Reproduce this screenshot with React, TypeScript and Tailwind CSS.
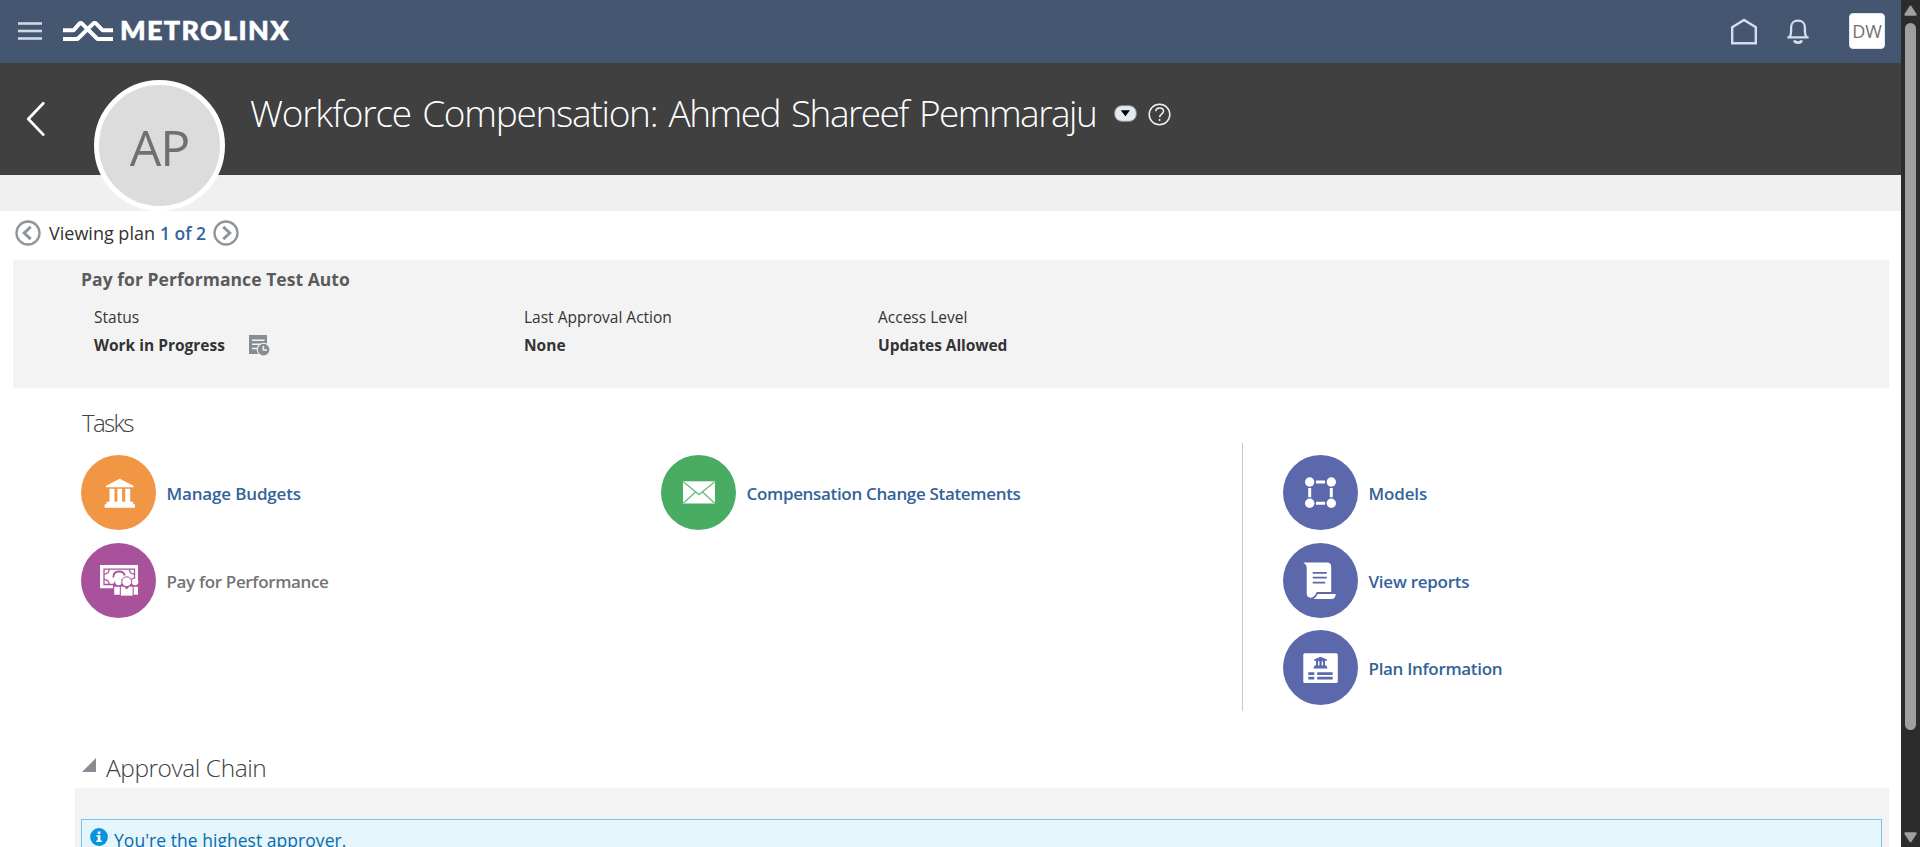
import type { ReactNode } from "react";

function TopBar() {
  return (
    <header className="flex h-[63px] shrink-0 items-center bg-[#455671]">
      <svg className="ml-[18px] mt-[-1px] h-[18px] w-6" viewBox="0 0 24 18" fill="#cfd9e6">
        <rect width="24" height="2.6" y="0.2" />
        <rect width="24" height="2.6" y="7.7" />
        <rect width="24" height="2.6" y="15.2" />
      </svg>
      <svg className="ml-5 mt-[-2px] h-[22px] w-[51px]" viewBox="62 20 51 22" fill="none" stroke="#fff" strokeWidth="4">
        <path d="M63 30.3h10.5l6.6-7.4h1.2L97.5 39H113" strokeLinejoin="bevel" />
        <path d="M63 39h14.5L94 22.9h1.4l7.3 7.4H113" strokeLinejoin="bevel" />
      </svg>
      <span className="ml-[7px] mt-[-3px] font-['Lato',sans-serif] text-[27px] leading-[40px] font-black tracking-[1.3px] text-white [-webkit-text-stroke:0.6px_white]">
        METROLINX
      </span>
      <div className="ml-auto flex items-center">
        <svg className="h-[27px] w-7" viewBox="0 0 28 27" fill="none" stroke="#d5deea" strokeWidth="2.4">
          <path d="M2.2 9.2 14 2l11.8 7.2v16.1H2.2Z" />
        </svg>
        <svg className="ml-[29px] h-[26px] w-[22px]" viewBox="0 0 22 26" fill="none" stroke="#d5deea" strokeWidth="2.3">
          <path d="M.4 18.4h21.2M2.6 18c1.2-1.5 1.5-3 1.5-5.4V8.3C4.1 4.3 6.9 1.7 11 1.7s6.9 2.6 6.9 6.6v4.300c0 2.400.3 3.900 1.500 5.400" />
          <path d="M7.3 21.3c.5 1.6 2 2.3 3.7 2.3s3.2-.7 3.7-2.3" strokeWidth="2.8" />
        </svg>
        <span className="mt-[-1px] mr-4 ml-10 flex size-9 items-center justify-center rounded-[4px] border border-[#dfe6ee] bg-white text-[18px] leading-[34px] text-[#707070]">
          DW
        </span>
      </div>
    </header>
  );
}

function PersonHeader() {
  return (
    <div className="flex h-[148px] shrink-0 flex-col">
      <div className="flex h-[112px] items-start bg-[#404040]">
        <svg className="mt-[38px] ml-[26px] h-9 w-5" viewBox="0 0 20 36" fill="none" stroke="#fff" strokeWidth="2.8" strokeLinecap="round" strokeLinejoin="round">
          <path d="M17.3 2.2 2.3 18l15 15.6" />
        </svg>
        <div className="z-10 mt-[17px] ml-12 flex size-[131px] shrink-0 items-center justify-center rounded-full border-[5px] border-white bg-[#dcdcdc] pt-[2px] text-[50px] leading-none tracking-[-1.2px] text-[#707070]">
          AP
        </div>
        <div className="mt-[20px] ml-[25px] flex h-[60px] items-center">
          <h1 className="text-[37px] leading-[60px] font-light whitespace-nowrap text-white [word-spacing:3px]">
            <span className="tracking-[-1.26px]">Workforce Compensation: </span>
            <span className="tracking-[-1.55px]">Ahmed Shareef Pemmaraju</span>
          </h1>
          <svg className="ml-[18px] h-[17px] w-[23px]" viewBox="0 0 23 17">
            <rect x=".7" y=".7" width="21.6" height="15.6" rx="7" fill="#e6ebef" stroke="#8698a8" strokeWidth="1" />
            <path d="M6.8 5.2h9.2l-4.6 6Z" fill="#000" />
          </svg>
          <svg className="mt-[2px] ml-[11px] size-[23px]" viewBox="0 0 23 23" fill="none" stroke="#f2f2f2" strokeWidth="1.5">
            <circle cx="11.5" cy="11.5" r="10.3" />
            <path d="M7.7 8.3c.2-2.1 1.7-3.3 3.9-3.3 2.3 0 3.9 1.2 3.9 3.2 0 2.900-3.900 2.900-3.900 6.100M11.600 16v2" />
          </svg>
        </div>
      </div>
      <div className="h-9 bg-[#f0f0f0]" />
    </div>
  );
}

function CircleArrow({ flip = false }: { flip?: boolean }) {
  return (
    <svg className={flip ? "size-[26px] rotate-180" : "size-[26px]"} viewBox="0 0 26 26" fill="none" stroke="#8f9499">
      <circle cx="13" cy="13" r="11.5" strokeWidth="2.3" />
      <path d="m15.7 6.9-6.500 6.100 6.500 6.100" strokeWidth="2.9" />
    </svg>
  );
}

function PlanPager() {
  return (
    <div className="mb-[5px] flex h-11 shrink-0 items-center pl-[15px] text-[18px] leading-[44px]">
      <CircleArrow />
      <span className="ml-[8px] text-[#333]">Viewing plan</span>
      <span className="ml-[5px] text-[17.5px] font-semibold text-[#34639a]">1 of 2</span>
      <span className="ml-[7px] flex">
        <CircleArrow flip />
      </span>
    </div>
  );
}

function Field({ label, children, className }: { label: ReactNode; children: ReactNode; className: string }) {
  return (
    <div className={"text-[15.5px] leading-7 text-[#333] " + className}>
      <div>{label}</div>
      <div className="flex items-center font-bold">{children}</div>
    </div>
  );
}

function PlanSummary() {
  return (
    <section className="mr-3 ml-[13px] h-32 shrink-0 bg-[#f3f3f3]">
      <h2 className="pl-[68px] text-[17.5px] leading-[38px] font-bold tracking-[0.05px] text-[#5b5b5b]">
        Pay for Performance Test Auto
      </h2>
      <div className="mt-[5px] flex pl-[81px]">
        <Field label="Status" className="w-[430px]">
          Work in Progress
          <svg className="ml-[24px] h-[21px] w-[21px]" viewBox="0 0 21 21">
            <path d="M0 0h18v19H0Z" fill="#878d92" />
            <path d="M3 5.2h12.5M3 9.3h8.5M3 13.5h5" stroke="#f3f3f3" strokeWidth="1.6" />
            <circle cx="14.6" cy="14.6" r="6.9" fill="#f3f3f3" />
            <circle cx="14.6" cy="14.6" r="5.8" fill="#878d92" />
            <path d="M14.4 11v4h3.6" stroke="#f3f3f3" strokeWidth="1.5" fill="none" />
          </svg>
        </Field>
        <Field label="Last Approval Action" className="w-[354px]">
          None
        </Field>
        <Field label="Access Level" className="w-[300px]">
          <span className="tracking-[-0.07px]">Updates Allowed</span>
        </Field>
      </div>
    </section>
  );
}

function BankIcon() {
  return (
    <svg className="size-[75px]" viewBox="0 0 75 75" fill="#fff">
      <path d="M25 32.3v-1.5L38.8 23.7 52.4 30.8v1.5Z" />
      <path d="M28.500 33.800h5V47h-5zM36.400 33.800h4.700V47h-4.700zM44.200 33.800h5V47h-5z" />
      <path d="M25.500 46.700h26.700v2.600h1.800v3.400H23.700v-3.400h1.800Z" />
    </svg>
  );
}

function MoneyIcon() {
  return (
    <svg className="size-[75px]" viewBox="0 0 75 75" fill="#fff">
      <path d="M19 22h38v23.300H19Z" />
      <path d="M23 26.200h30.500v15.300H23Z" fill="none" stroke="#a9529c" strokeWidth="1.3" />
      <path d="M23.200 31.200c3-.3 4.700-2 5-4.700M23.200 36.300c3 .3 4.700 2 5 4.700M48.300 26.500c.3 2.700 2 4.400 5 4.700" stroke="#a9529c" strokeWidth="1.3" fill="none" />
      <path d="M32.300 34.500c0-4 2.300-6 5.700-6 3.300 0 5.200 1.500 5.700 4" stroke="#a9529c" strokeWidth="1.8" fill="none" />
      <path d="M32 46.500v-5l2-3.500 3.300-2.500 5 1.500 3.300-3.500 4 2.500 3.500-1.500 4.500 3v9Z" fill="#a9529c" />
      <circle cx="37.5" cy="38.8" r="3.4" />
      <circle cx="54" cy="38.8" r="3.4" />
      <path d="M33.200 43.700h5.600v8.100h-5.600zM52.600 43.700H57v8.100h-4.400z" />
      <circle cx="45.7" cy="38.7" r="4.9" stroke="#a9529c" strokeWidth="1" />
      <path d="M39.500 43.300H43l2.700 2.800 2.800-2.800h3.500v9.700H39.500Z" stroke="#a9529c" strokeWidth=".7" />
    </svg>
  );
}

function MailIcon() {
  return (
    <svg className="size-[75px]" viewBox="0 0 75 75">
      <path d="M22 26.3h32v22.2H22Z" fill="#fff" />
      <path d="m22.500 27 15.500 12.500L53.500 27M22.500 48l12-11M53.500 48l-12-11" fill="none" stroke="#6cbd82" strokeWidth="1.4" />
    </svg>
  );
}

function ModelsIcon() {
  return (
    <svg className="size-[75px]" viewBox="0 0 75 75" fill="#fff">
      <circle cx="26.7" cy="27" r="4.7" />
      <circle cx="48.3" cy="27" r="4.7" />
      <circle cx="26.7" cy="48.3" r="4.7" />
      <circle cx="48.3" cy="48.3" r="4.7" />
      <path d="M33 25.500h9v3h-9zM33 46.800h9v3h-9zM25.200 33h3v9.300h-3zM46.800 33h3v9.300h-3z" />
    </svg>
  );
}

function ReportIcon() {
  return (
    <svg className="size-[75px]" viewBox="0 0 75 75" fill="#fff">
      <path d="M20.300 19.500h24c2.500 0 3.900 1.700 3.900 4.500v25H33.700c-1.300 3.300-3 5.500-5.700 5.700-3 .2-4.300-1.800-4.300-4.700V25c0-2.500-1-4-3.400-5.500Z" />
      <path d="M34.500 51h18.300c-.3 2.900-1.500 4.600-3.600 5H30.500c1.800-1 3.200-2.700 4-5Z" />
      <path d="M29.700 29.800h14M29.700 34.700h14M29.700 39.700h12.500" stroke="#5c68ac" strokeWidth="1.8" />
    </svg>
  );
}

function PlanIcon() {
  return (
    <svg className="size-[75px]" viewBox="0 0 75 75">
      <rect x="20.3" y="23.3" width="34.5" height="29.7" rx="1.5" fill="#fff" />
      <g fill="#5c68ac">
        <path d="M31 30.700v-1.200l6.500-2.700 6.500 2.700v1.200h-2v4.800h1.500l1 3H30.400l1-3H33v-4.800Z" />
        <path d="M25.300 42.300h6v2.800h-6zM34.200 42.300h15.500v2.800H34.200zM25.300 46.700h6v2.800h-6zM34.200 46.700h15.500v2.800H34.200z" />
      </g>
      <path d="M35.700 31.200v4.300M39.400 31.200v4.300" stroke="#fff" strokeWidth="1.4" />
    </svg>
  );
}

function Task({ icon, color, children }: { icon: ReactNode; color: string; children: ReactNode }) {
  return (
    <div className="flex items-center">
      <span className={"size-[75px] shrink-0 rounded-full " + color}>{icon}</span>
      <span className="ml-[10.5px] pt-[3px] text-[17px] leading-[30px] font-semibold whitespace-nowrap text-[#34639a]">
        {children}
      </span>
    </div>
  );
}

function Tasks() {
  return (
    <section className="shrink-0 pl-[81px]">
      <h2 className="pt-[14px] pl-[1px] text-[24px] leading-[41px] font-light tracking-[-1.7px] text-[#404040]">Tasks</h2>
      <div className="flex h-[268px]">
        <div className="flex w-[580px] flex-col gap-[13px] pt-3">
          <Task icon={<BankIcon />} color="bg-[#f09644]">
            <span className="tracking-[-0.16px]">Manage Budgets</span>
          </Task>
          <Task icon={<MoneyIcon />} color="bg-[#a9529c]">
            <span className="tracking-[-0.35px] text-[#747474]">Pay for Performance</span>
          </Task>
        </div>
        <div className="w-[581px] pt-3">
          <Task icon={<MailIcon />} color="bg-[#48ac62]">
            <span className="tracking-[-0.33px]">Compensation Change Statements</span>
          </Task>
        </div>
        <div className="flex flex-col gap-[12.5px] border-l border-[#c8c8c8] pt-3 pl-10">
          <Task icon={<ModelsIcon />} color="bg-[#5c68ac]">
            <span className="tracking-[-0.15px]">Models</span>
          </Task>
          <Task icon={<ReportIcon />} color="bg-[#5c68ac]">
            <span className="tracking-[-0.25px]">View reports</span>
          </Task>
          <Task icon={<PlanIcon />} color="bg-[#5c68ac]">
            <span className="tracking-[-0.32px]">Plan Information</span>
          </Task>
        </div>
      </div>
    </section>
  );
}

function ApprovalChain() {
  return (
    <section className="shrink-0 pl-[75px]">
      <div className="flex items-center pt-9 pl-[7px]">
        <svg className="mb-[6px] size-[14px]" viewBox="0 0 14 14" fill="#878d92">
          <path d="M14 0v14H0Z" />
        </svg>
        <h2 className="ml-[10px] text-[24.5px] leading-[41px] font-light tracking-[-0.45px] text-[#404040]">
          Approval Chain
        </h2>
      </div>
      <div className="mr-3 h-[120px] bg-[#f3f3f3] pt-[31px] pr-[7px] pl-[6px]">
        <div className="flex h-20 border border-[#79c5ea] bg-[#e4f5fc] pl-2">
          <svg className="mt-2 size-[18px]" viewBox="0 0 18 18">
            <circle cx="9" cy="9" r="8.9" fill="#0a93dc" />
            <path d="M7.700 3.600h2.700v2.300H7.700ZM6.500 7.300h3.900v5.200h1.400v1.500H6.300v-1.500h1.500V8.800H6.500Z" fill="#fff" />
          </svg>
          <p className="ml-[6px] text-[17.5px] leading-[41px] tracking-[0.04px] text-[#0a6ba8]">
            You're the highest approver.
          </p>
        </div>
      </div>
    </section>
  );
}

function Scrollbar() {
  return (
    <div className="flex w-[19px] shrink-0 flex-col items-center bg-[#2c2c2c] pt-[5px] pb-[4px]">
      <svg className="h-[11px] w-[13px]" viewBox="0 0 13 11" fill="#9f9f9f">
        <path d="M5.500 1.200q1-1.400 2 0l5 7.800q.6 1.600-1 1.800H1.500q-1.600-.2-1-1.800Z" />
      </svg>
      <div className="mt-[7px] h-[707px] w-[11px] rounded-full bg-[#9f9f9f]" />
      <svg className="mt-auto h-[11px] w-[13px] rotate-180" viewBox="0 0 13 11" fill="#9f9f9f">
        <path d="M5.500 1.200q1-1.400 2 0l5 7.800q.6 1.600-1 1.800H1.500q-1.600-.2-1-1.800Z" />
      </svg>
    </div>
  );
}

export default function App() {
  return (
    <div className="flex h-[847px] w-full overflow-hidden bg-white font-['Open_Sans','Noto_Sans',sans-serif]">
      <main className="flex min-w-0 flex-1 flex-col overflow-hidden">
        <TopBar />
        <PersonHeader />
        <PlanPager />
        <PlanSummary />
        <Tasks />
        <ApprovalChain />
      </main>
      <Scrollbar />
    </div>
  );
}
